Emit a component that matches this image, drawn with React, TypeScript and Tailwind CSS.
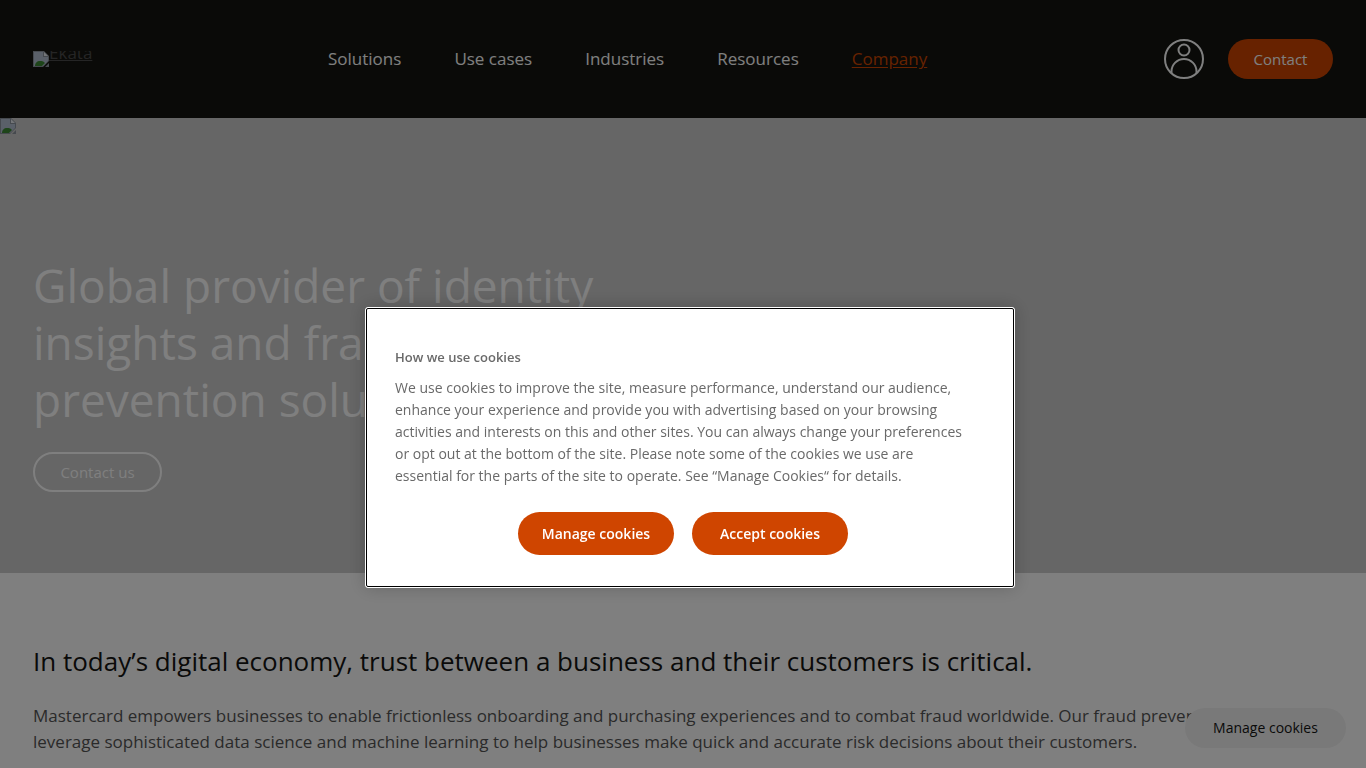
import { useState } from "react";

const navItems = [
  { label: "Solutions", active: false },
  { label: "Use cases", active: false },
  { label: "Industries", active: false },
  { label: "Resources", active: false },
  { label: "Company", active: true },
];

function MissingImage() {
  return (
    <svg viewBox="0 0 16 16" className="w-4 h-4 shrink-0" aria-hidden="true">
      <path d="M0 0h11l5 5v5l-6 6H0z" fill="#8d949e" />
      <path d="M1 1h9v5h5v4l-5 5H1z" fill="#b4c0d2" />
      <path d="M11 1v4h4z" fill="#e6eaf0" />
      <path d="M2 15c0-3 2-5 5-5 2 0 3 0 5 2l-3 3z" fill="#3d8a34" />
      <path d="M16 12v4h-4z" fill="#8d949e" />
    </svg>
  );
}

function AccountIcon() {
  return (
    <svg viewBox="0 0 40 40" className="w-10 h-10" fill="none" stroke="#fff" strokeWidth="2" aria-hidden="true">
      <circle cx="20" cy="20" r="19" />
      <circle cx="20" cy="11" r="5.5" />
      <path d="M7.500 34v-1.500a12.500 12.500 0 0 1 25 0V34" />
    </svg>
  );
}

function Header() {
  return (
    <header className="flex items-center justify-between h-[118px] px-[33px] bg-[#141510]">
      <div className="w-[295px]">
        <a href="#" className="flex items-start h-4 overflow-hidden text-[17px] leading-1 text-[#4a4a4a]" aria-label="Ekata">
          <MissingImage />
          <span className="underline">Ekata</span>
        </a>
      </div>
      <nav className="flex flex-1 gap-[53px] text-[17px] text-white">
        {navItems.map((item) => (
          <a key={item.label} href="#" className={item.active ? "text-[#cf4500] underline underline-offset-2" : ""}>
            {item.label}
          </a>
        ))}
      </nav>
      <div className="flex items-center gap-6">
        <button aria-label="Account">
          <AccountIcon />
        </button>
        <button className="w-[105px] h-10 rounded-full bg-[#cf4500] text-[15px] text-white">Contact</button>
      </div>
    </header>
  );
}

function Hero() {
  return (
    <section className="bg-[#ccc] pb-[81px]">
      <MissingImage />
      <div className="px-[33px] pt-[123px]">
        <h1 className="max-w-[600px] text-[46px] leading-[57px] text-white">
          Global provider of identity insights and fraud prevention solutions
        </h1>
        <button className="mt-6 w-[129px] h-10 rounded-full border-2 border-white text-[15px] text-white">
          Contact us
        </button>
      </div>
    </section>
  );
}

function CookieDialog({ onClose }: { onClose: () => void }) {
  return (
    <div className="fixed inset-0 z-50 flex items-end justify-center bg-black/50 pb-[180px] pl-[14px]">
      <div
        role="dialog"
        aria-labelledby="cookie-title"
        className="w-[650px] rounded-[3px] border border-white bg-white shadow-[0_0_18px_rgba(0,0,0,0.2)]"
      >
        <div className="rounded-[2px] border border-black px-7 pt-[38px] pb-[31px]">
          <h2 id="cookie-title" className="text-[13px] leading-5 font-semibold text-[#696969]">
            How we use cookies
          </h2>
          <p className="mt-[10px] max-w-[574px] text-sm leading-[22px] text-[#696969]">
            We use cookies to improve the site, measure performance, understand our audience, enhance your experience
            and provide you with advertising based on your browsing activities and interests on this and other sites.
            You can always change your preferences or opt out at the bottom of the site. Please note some of the
            cookies we use are essential for the parts of the site to operate. See “Manage Cookies“ for details.
          </p>
          <div className="flex justify-center gap-[18px] mt-[25px] pr-[14px]">
            <button onClick={onClose} className="w-[156px] h-[43px] rounded-full bg-[#cf4500] text-sm font-semibold text-white">
              Manage cookies
            </button>
            <button onClick={onClose} className="w-[156px] h-[43px] rounded-full bg-[#cf4500] text-sm font-semibold text-white">
              Accept cookies
            </button>
          </div>
        </div>
      </div>
    </div>
  );
}

export default function App() {
  const [open, setOpen] = useState(true);

  return (
    <div className="h-screen overflow-hidden bg-white font-['Open_Sans','Noto_Sans',sans-serif]">
      <Header />
      <main>
        <Hero />
        <section className="px-[33px] pt-[70px]">
          <h2 className="text-[26px] leading-9 text-[#141413]">
            In today’s digital economy, trust between a business and their customers is critical.
          </h2>
          <p className="mt-6 text-[17px] leading-[26px] text-[#555]">
            Mastercard empowers businesses to enable frictionless onboarding and purchasing experiences and to combat
            fraud worldwide. Our fraud prevention solutions leverage sophisticated data science and machine learning to
            help businesses make quick and accurate risk decisions about their customers.
          </p>
        </section>
      </main>
      <button
        onClick={() => setOpen(true)}
        className="fixed right-5 bottom-5 w-[161px] h-10 rounded-full bg-[#f3f3f3] text-sm text-[#141413]"
      >
        Manage cookies
      </button>
      {open && <CookieDialog onClose={() => setOpen(false)} />}
    </div>
  );
}
